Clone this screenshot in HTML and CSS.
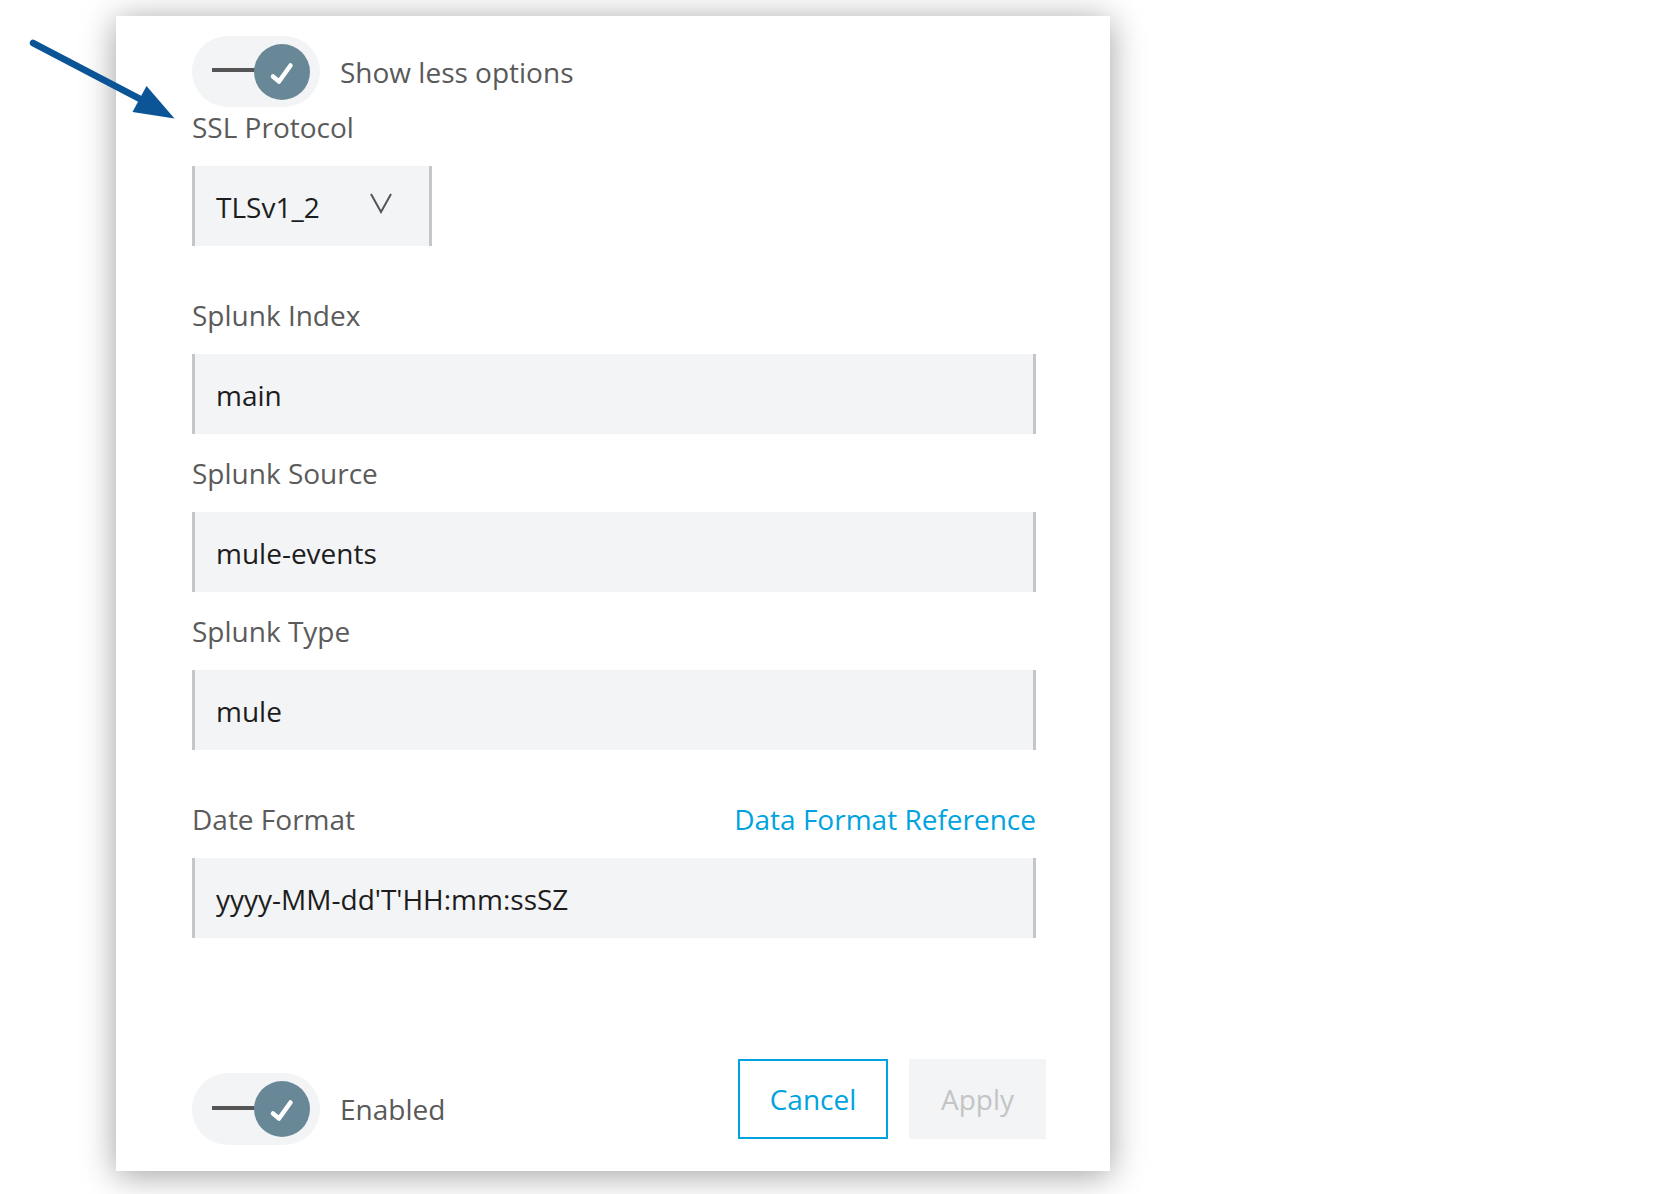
FILE: index.html
```html
<!DOCTYPE html>
<html lang="en">
<head>
<meta charset="utf-8">
<title>Splunk settings</title>
<link rel="stylesheet" href="styles.css">
</head>
<body>
<svg class="annot-arrow" width="200" height="140" viewBox="0 0 200 140" aria-hidden="true">
  <line x1="33" y1="43" x2="142" y2="100" stroke="#0b5596" stroke-width="6.5" stroke-linecap="round"/>
  <polygon points="174.5,118.5 146.5,86 132.5,112" fill="#0b5596"/>
</svg>
<div class="card">
  <div class="toggle-row">
    <div class="toggle">
      <span class="toggle-line"></span>
      <span class="toggle-knob">
        <svg width="56" height="56" viewBox="0 0 56 56"><polyline points="19,32.5 25,37.5 36.5,21.5" fill="none" stroke="#fff" stroke-width="4.5" stroke-linecap="round" stroke-linejoin="round"/></svg>
      </span>
    </div>
    <span class="toggle-text">Show less options</span>
  </div>

  <div class="fields">
    <div class="field field-ssl">
      <div class="label">SSL Protocol</div>
      <div class="select">
        <span>TLSv1_2</span>
        <svg class="chev" width="22" height="22" viewBox="0 0 22 22"><polyline points="1,2 11,20 21,2" fill="none" stroke="#555" stroke-width="2"/></svg>
      </div>
    </div>

    <div class="field field-gap-lg">
      <div class="label">Splunk Index</div>
      <div class="input">main</div>
    </div>

    <div class="field">
      <div class="label">Splunk Source</div>
      <div class="input">mule-events</div>
    </div>

    <div class="field">
      <div class="label">Splunk Type</div>
      <div class="input">mule</div>
    </div>

    <div class="field field-gap-lg">
      <div class="label-row">
        <span class="label">Date Format</span>
        <a class="link" href="#">Data Format Reference</a>
      </div>
      <div class="input">yyyy-MM-dd'T'HH:mm:ssSZ</div>
    </div>
  </div>

  <div class="footer">
    <div class="toggle-row enabled-row">
      <div class="toggle">
        <span class="toggle-line"></span>
        <span class="toggle-knob">
          <svg width="56" height="56" viewBox="0 0 56 56"><polyline points="19,32.5 25,37.5 36.5,21.5" fill="none" stroke="#fff" stroke-width="4.5" stroke-linecap="round" stroke-linejoin="round"/></svg>
        </span>
      </div>
      <span class="toggle-text">Enabled</span>
    </div>
    <div class="buttons">
      <button class="btn btn-cancel">Cancel</button>
      <button class="btn btn-apply">Apply</button>
    </div>
  </div>
</div>
</body>
</html>
```

FILE: styles.css
```css
html, body {
  margin: 0;
  padding: 0;
  background: #ffffff;
}
body {
  font-family: "Open Sans", "Noto Sans", sans-serif;
  font-size: 28px;
  line-height: 38px;
  position: relative;
  padding-top: 16px;
  padding-left: 116px;
  min-height: 1178px;
}
.annot-arrow {
  position: absolute;
  left: 0;
  top: 0;
  z-index: 2;
}
.card {
  width: 994px;
  box-sizing: border-box;
  background: #fff;
  padding: 20px 64px 26px 76px;
  box-shadow: 0 4px 32px rgba(0, 0, 0, 0.38);
}
.toggle-row {
  display: flex;
  align-items: center;
  gap: 20px;
}
.toggle {
  width: 128px;
  height: 71px;
  border-radius: 36px;
  background: #f3f4f6;
  box-sizing: border-box;
  padding-left: 20px;
  display: flex;
  align-items: center;
  flex-shrink: 0;
}
.toggle-line {
  width: 44px;
  height: 4px;
  background: #555;
  margin-right: -2px;
  margin-top: -3px;
}
.toggle-knob {
  width: 56px;
  height: 56px;
  border-radius: 50%;
  background: #698897;
  display: block;
}
.toggle-knob svg { display: block; }
.toggle-text {
  color: #595959;
}
.fields {
  width: 844px;
}
.field {
  display: flex;
  flex-direction: column;
  gap: 20px;
  margin-top: 20px;
}
.field-ssl { margin-top: 1px; }
.field-gap-lg { margin-top: 50px; }
.label {
  color: #5b5b5b;
}
.label-row {
  display: flex;
  justify-content: space-between;
}
.link {
  color: #00a3e0;
  text-decoration: none;
}
.input, .select {
  height: 80px;
  box-sizing: border-box;
  background: #f3f4f6;
  border-left: 3px solid #c6c6c8;
  border-right: 3px solid #c6c6c8;
  padding-left: 21px;
  padding-top: 2px;
  display: flex;
  align-items: center;
  color: #1d1d1d;
}
.select {
  width: 240px;
  justify-content: space-between;
  padding-right: 37px;
}
.chev {
  display: block;
  margin-bottom: 8px;
}
.footer {
  display: flex;
  justify-content: space-between;
  align-items: flex-start;
  margin-top: 121px;
}
.enabled-row {
  margin-top: 14px;
}
.enabled-row .toggle { height: 72px; }
.buttons {
  display: flex;
  gap: 21px;
}
.btn {
  font-family: "Open Sans", "Noto Sans", sans-serif;
  font-size: 28px;
  line-height: 38px;
  height: 80px;
  box-sizing: border-box;
  padding: 0;
  margin: 0;
  cursor: pointer;
}
.btn-cancel {
  width: 150px;
  background: #fff;
  border: 2px solid #00a3e0;
  color: #00a3e0;
}
.btn-apply {
  width: 137px;
  background: #f3f4f6;
  border: none;
  color: #c4c4c4;
}
```
